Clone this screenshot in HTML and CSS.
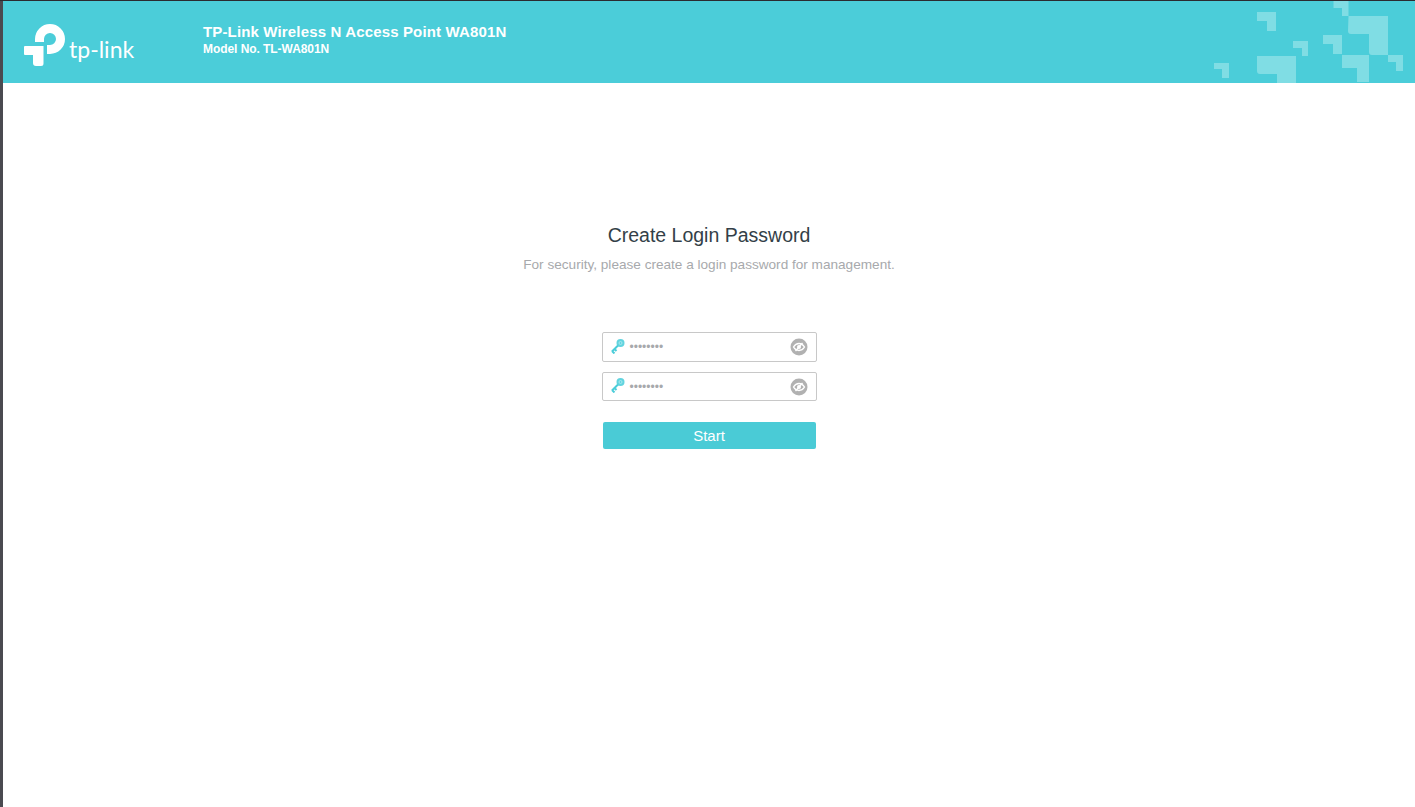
FILE: index.html
```html
<!DOCTYPE html>
<html lang="en">
<head>
  <meta charset="UTF-8">
  <meta name="viewport" content="width=device-width, initial-scale=1.0">
  <title>TP-Link Wireless N Access Point WA801N</title>
  <link rel="stylesheet" href="styles.css">
</head>
<body>
  <div class="topline"></div>
  <div id="page">
    <div class="header">
      <div class="logo">
        <svg class="logo-mark" width="42" height="43" viewBox="24 24 42 43">
          <path d="M39.500 42V39A10.500 10.500 0 1 1 50 49.500H47" fill="none" stroke="#fff" stroke-width="9"/>
          <path d="M24 47a1 1 0 0 1 1-1H43.500V63.500a2.500 2.500 0 0 1-2.500 2.500H36a3 3 0 0 1-3-3V55H25a1 1 0 0 1-1-1Z" fill="#fff"/>
        </svg>
        <span class="logo-text">tp-link</span>
      </div>
      <div class="model">
        <div class="model-name">TP-Link Wireless N Access Point WA801N</div>
        <div class="model-no">Model No. TL-WA801N</div>
      </div>
      <svg class="pattern" width="201" height="82" viewBox="1214 1 201 82">
        <g fill="#80dde4">
          <path d="M1333.500 1H1348.500V16H1342V8H1333.500Z"/>
          <path d="M1348.500 16H1388V55H1372a3 3 0 0 1-3-3V34H1351a3 3 0 0 1-3-3Z"/>
          <path d="M1257 12H1276V31H1267V21H1257Z"/>
          <path d="M1293 41H1308V56H1302V48H1293Z"/>
          <path d="M1323 35H1342V54H1333V44H1323Z"/>
          <path d="M1342 55H1369V82H1357V68H1342Z"/>
          <path d="M1388 55H1403V71H1396V62H1388Z"/>
          <path d="M1214 63H1229V78H1222V69H1214Z"/>
          <path d="M1257 56H1296V83H1277V74H1260a3 3 0 0 1-3-3Z"/>
        </g>
      </svg>
    </div>

    <div class="content">
      <h1 class="title">Create Login Password</h1>
      <p class="note">For security, please create a login password for management.</p>

      <div class="form">
        <div class="field">
          <svg class="key" width="16" height="16" viewBox="0 0 16 16">
            <circle cx="10.500" cy="5" r="4" fill="#62d4df"/>
            <circle cx="10.500" cy="5" r="1.500" fill="none" stroke="#a9e8ee" stroke-width="1"/>
            <path d="M8 7.500L2 13.500M2 13L4.500 15.500M4.500 11L6.500 13" fill="none" stroke="#4bcdd9" stroke-width="2"/>
          </svg>
          <span class="dots">••••••••</span>
          <svg class="eye" width="18" height="18" viewBox="0 0 18 18">
            <circle cx="9" cy="9" r="8.500" fill="#b1b1b1"/>
            <path d="M3.500 9C5 6.500 7 5.500 9 5.500S13 6.500 14.500 9C13 11.500 11 12.500 9 12.500S5 11.500 3.500 9Z" fill="none" stroke="#fff" stroke-width="1.400"/>
            <circle cx="9" cy="9" r="2" fill="#fff"/>
            <path d="M5.500 13L12.500 5" stroke="#fff" stroke-width="1.400"/>
          </svg>
        </div>
        <div class="field field-second">
          <svg class="key" width="16" height="16" viewBox="0 0 16 16">
            <circle cx="10.500" cy="5" r="4" fill="#62d4df"/>
            <circle cx="10.500" cy="5" r="1.500" fill="none" stroke="#a9e8ee" stroke-width="1"/>
            <path d="M8 7.500L2 13.500M2 13L4.500 15.500M4.500 11L6.500 13" fill="none" stroke="#4bcdd9" stroke-width="2"/>
          </svg>
          <span class="dots">••••••••</span>
          <svg class="eye" width="18" height="18" viewBox="0 0 18 18">
            <circle cx="9" cy="9" r="8.500" fill="#b1b1b1"/>
            <path d="M3.500 9C5 6.500 7 5.500 9 5.500S13 6.500 14.500 9C13 11.500 11 12.500 9 12.500S5 11.500 3.500 9Z" fill="none" stroke="#fff" stroke-width="1.400"/>
            <circle cx="9" cy="9" r="2" fill="#fff"/>
            <path d="M5.500 13L12.500 5" stroke="#fff" stroke-width="1.400"/>
          </svg>
        </div>
        <button class="start">Start</button>
      </div>
    </div>
  </div>
</body>
</html>
```

FILE: styles.css
```css
html, body {
  height: 100%;
}

body {
  margin: 0;
  background: #4a4a50;
  font-family: "Liberation Sans", Arial, sans-serif;
  display: flex;
  flex-direction: column;
  overflow: hidden;
}

.topline {
  height: 1px;
  background: #2b2b30;
  flex: none;
}

#page {
  flex: 1;
  margin-left: 3px;
  background: white;
}

.header {
  position: relative;
  height: 82px;
  background: #4bcdd9;
  color: white;
  display: flex;
  align-items: flex-start;
  overflow: hidden;
}

.logo {
  width: 200px;
  flex: none;
  display: flex;
  align-items: flex-start;
  padding-left: 21px;
  box-sizing: border-box;
}

.logo-mark {
  margin-top: 23px;
  flex: none;
}

.logo-text {
  font-family: "Lato", sans-serif;
  font-weight: 400;
  font-size: 23px;
  line-height: 30px;
  margin-top: 33px;
  margin-left: 3px;
}

.model {
  padding-top: 22px;
  font-weight: bold;
}

.model-name {
  font-size: 15px;
  line-height: 18px;
  letter-spacing: 0.15px;
}

.model-no {
  font-size: 12px;
  line-height: 14px;
  margin-top: 1px;
  letter-spacing: -0.06px;
}

.pattern {
  position: absolute;
  top: 0;
  right: 0;
}

.content {
  display: flex;
  flex-direction: column;
  align-items: center;
}

.title {
  margin: 140px 0 0;
  font-size: 19.500px;
  font-weight: normal;
  line-height: 24px;
  color: #333f48;
}

.note {
  margin: 10px 0 0;
  font-size: 13.600px;
  line-height: 16px;
  color: #a7a9ac;
}

.form {
  width: 215px;
  margin-top: 59px;
  display: flex;
  flex-direction: column;
}

.field {
  height: 30px;
  box-sizing: border-box;
  border: 1px solid #c8c8c8;
  border-radius: 2px;
  display: flex;
  align-items: center;
  padding: 0 8px 0 7px;
}

.field-second {
  height: 29px;
  margin-top: 10px;
}

.key {
  flex: none;
  margin-top: -3px;
}

.dots {
  flex: 1;
  margin-left: 4px;
  font-size: 12px;
  color: #a7a9ac;
}

.eye {
  flex: none;
}

.start {
  height: 27px;
  margin: 21px 1px 0;
  padding: 0;
  border: none;
  border-radius: 2px;
  background: #4acbd6;
  color: white;
  font-family: inherit;
  font-size: 15px;
}
```
